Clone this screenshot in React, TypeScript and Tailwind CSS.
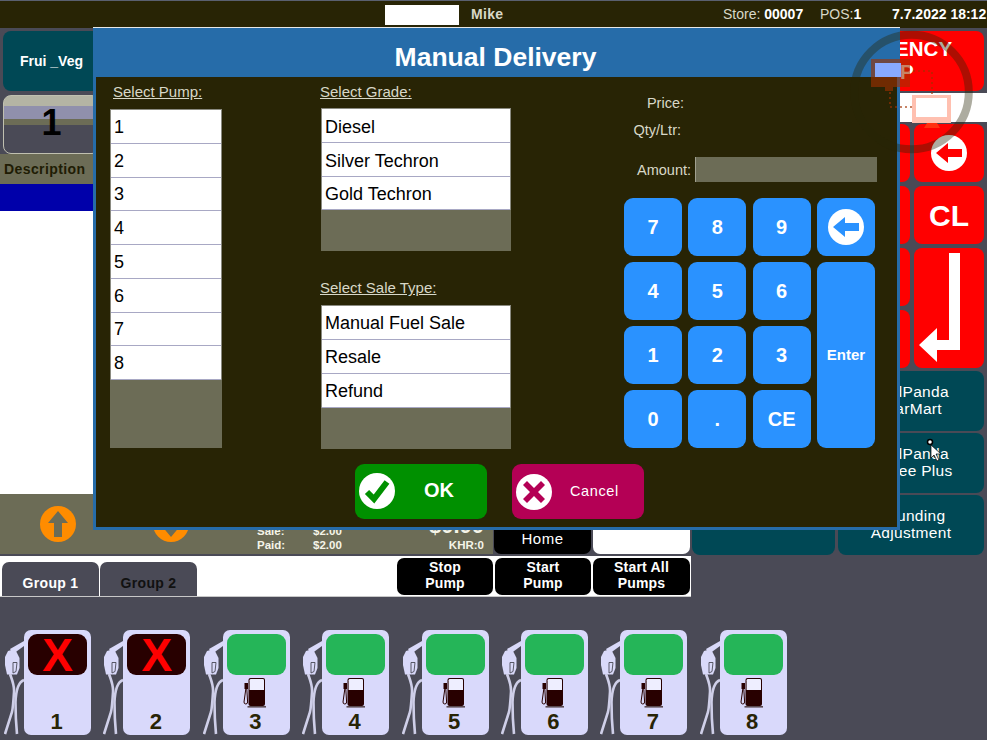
const FONT = "font-['Liberation_Sans',Arial,sans-serif]";

function ArrowCircle({ color, size = 36, dir = "left" }: { color: string; size?: number; dir?: string }) {
  const rot = dir === "up" ? 90 : dir === "down" ? -90 : 0;
  return (
    <svg width={size} height={size} viewBox="-18 -18 36 36" className="shrink-0">
      <circle r="18" fill={dir === "left" ? "#fff" : "#ff8c00"} />
      <path transform={`rotate(${rot})`} d="M-13 0 L-1 -10 L-1 -4 L13 -4 L13 4 L-1 4 L-1 10 Z" fill={color} />
    </svg>
  );
}

function Nozzle() {
  return (
    <svg width="20" height="105" viewBox="0 0 20 105" className="shrink-0" fill="none">
      <path d="M20 11 L6 19 L9 24 L20 16 Z" fill="#d9d9f9" />
      <path d="M1 27 L4 21 L11 19 L15.5 28 L15.5 38 L13 44.5 L3 44.5 L1 35 Z" fill="#d9d9f9" />
      <path d="M9 32.5 H13 L12 41.5 L9 43 Z" stroke="#4a4a56" strokeWidth="0.9" />
      <path d="M6 44 C8 50 10.5 55 10 62 C9.5 70 9 78 8 82 L1 104" stroke="#cfcfe8" strokeWidth="2.6" />
      <path d="M20 50 C14 52 12 60 11.5 72 C11.5 84 12 94 13 104" stroke="#cfcfe8" strokeWidth="2.6" />
    </svg>
  );
}

function FuelIcon() {
  return (
    <svg width="24" height="33" viewBox="0 0 24 33" className="shrink-0">
      <rect x="5.5" y="1" width="16.5" height="28" rx="2" fill="#280000" />
      <path d="M6.6 3.2 Q6.6 2 8 2 L19.8 2 Q21 2 21 3.2 L21 13 L6.6 13 Z" fill="#eeeeff" />
      <rect x="4.5" y="29" width="18.5" height="1.6" fill="#5a4a50" />
      <rect x="1.5" y="6" width="3.5" height="6" fill="#280000" />
      <path d="M2.8 12 L1 25 Q1 27 2.8 27 Q4.6 27 4.6 25 L3.8 12" fill="none" stroke="#280000" strokeWidth="1" />
    </svg>
  );
}

function Pump({ n, off }: { n: number; off?: boolean }) {
  return (
    <div className="flex shrink-0">
      <Nozzle />
      <div className="w-[67px] h-[105px] rounded-[7px] bg-[#d9d9fb] flex flex-col items-center pt-[4px]">
        {off ? (
          <div className="w-[59px] h-[41px] rounded-[9px] bg-[#280000] flex items-center justify-center text-[#ff0000] text-[46px] leading-none font-bold">X</div>
        ) : (
          <div className="w-[59px] h-[41px] rounded-[9px] bg-[#25b558]" />
        )}
        <div className="h-[33px] mt-[2px] -ml-[3px]">{off ? null : <FuelIcon />}</div>
        <div className="text-[22px] leading-[22px] mt-[1px] pr-[2px] font-bold text-[#282405]">{n}</div>
      </div>
    </div>
  );
}

function BlackBtn({ children, w = "w-[96px]" }: { children: React.ReactNode; w?: string }) {
  return (
    <div className={`${w} h-[37px] pb-[3px] rounded-[7px] bg-black text-white text-[14px] leading-[16px] font-bold tracking-[0.2px] flex items-center justify-center text-center`}>
      {children}
    </div>
  );
}

function RedKey({ children, className = "" }: { children?: React.ReactNode; className?: string }) {
  return <div className={`rounded-[8px] bg-[#ff0000] text-white flex items-center justify-center ${className}`}>{children}</div>;
}

function Teal({ children }: { children?: React.ReactNode }) {
  return (
    <div className="rounded-[8px] bg-[#004855] text-white text-[15.5px] leading-[17px] tracking-[0.3px] flex items-center justify-center text-center h-[60px] pb-[2px]">
      {children}
    </div>
  );
}

function ListBox({ items, fill, rowPad = "pt-[2px]" }: { items: string[]; fill: string; rowPad?: string }) {
  return (
    <div className="flex flex-col bg-[#6c6c56]">
      <div className="border border-[#8a8a80] border-b-0">
        {items.map((t) => (
          <div key={t} className={`bg-white text-black text-[18px] h-[33.75px] pl-[3px] flex items-center border-b border-[#a8a8c4] ${rowPad}`}>
            {t}
          </div>
        ))}
      </div>
      <div className={fill} />
    </div>
  );
}

function NumKey({ children, className = "" }: { children: React.ReactNode; className?: string }) {
  return (
    <div className={`rounded-[9px] bg-[#2a92ff] text-white text-[20px] font-bold flex items-center justify-center ${className}`}>
      {children}
    </div>
  );
}

function Dialog() {
  const label = "text-[15px] leading-[16px] text-[#d8d8c8] underline underline-offset-1";
  const small = "text-[14.5px] leading-[20px] text-[#d8d8c8]";
  return (
    <div className="absolute left-[93px] top-[27px] w-[807px] h-[503px] border-t border-[#e8e8e8] bg-[#266ca9] flex flex-col">
      <div className="h-[49px] flex items-center justify-center text-white text-[26.5px] font-bold pt-[10px] pr-[2px]">Manual Delivery</div>
      <div className="flex-1 mx-[3px] mb-[3px] bg-[#282405] flex flex-col">
        <div className="flex h-[371px]">
          <div className="ml-[14px] w-[112px] pt-[7px]">
            <div className={`${label} ml-[3px] mb-[9px]`}>Select Pump:</div>
            <ListBox items={["1", "2", "3", "4", "5", "6", "7", "8"]} fill="h-[68px]" />
          </div>
          <div className="ml-[99px] w-[190px] pt-[7px]">
            <div className={`${label} -ml-px mb-[8px]`}>Select Grade:</div>
            <ListBox items={["Diesel", "Silver Techron", "Gold Techron"]} fill="h-[41px]" rowPad="pt-[4px]" />
            <div className={`${label} -ml-px mt-[29px] mb-[9px]`}>Select Sale Type:</div>
            <ListBox items={["Manual Fuel Sale", "Resale", "Refund"]} fill="h-[41px]" />
          </div>
          <div className="ml-[113px] w-[253px] pt-[16px]">
            <div className={`${small} text-right w-[60px]`}>Price:</div>
            <div className={`${small} text-right w-[57px] mt-[7px]`}>Qty/Ltr:</div>
            <div className="flex items-center mt-[17px] h-[25px]">
              <div className={`${small} w-[67px] text-right mr-[4px]`}>Amount:</div>
              <div className="w-[182px] h-[25px] bg-[#6c6c56] border-l border-[#a0a090]" />
            </div>
            <div className="grid grid-cols-[58px_58px_58px_58px] grid-rows-[58px_58px_58px_58px] gap-x-[6.3px] gap-y-[6px] mt-[16px]">
              <NumKey>7</NumKey>
              <NumKey>8</NumKey>
              <NumKey>9</NumKey>
              <NumKey><ArrowCircle color="#2a92ff" /></NumKey>
              <NumKey>4</NumKey>
              <NumKey>5</NumKey>
              <NumKey>6</NumKey>
              <NumKey className="row-span-3 !text-[15px]">Enter</NumKey>
              <NumKey>1</NumKey>
              <NumKey>2</NumKey>
              <NumKey>3</NumKey>
              <NumKey>0</NumKey>
              <NumKey>.</NumKey>
              <NumKey>CE</NumKey>
            </div>
          </div>
        </div>
        <div className="flex ml-[259px] gap-[25px] mt-[16px]">
          <div className="w-[132px] h-[55px] rounded-[9px] bg-[#009000] flex items-center pl-[4px] pb-[1px] text-white">
            <svg width="36" height="36" viewBox="-18 -18 36 36">
              <circle r="18" fill="#fff" />
              <path d="M-10 1 L-3 8 L10 -9" fill="none" stroke="#009000" strokeWidth="6" />
            </svg>
            <span className="ml-[29px] -mt-[2px] text-[20px] font-bold">OK</span>
          </div>
          <div className="w-[132px] h-[55px] rounded-[9px] bg-[#b40055] flex items-center pl-[4px] text-white">
            <svg width="36" height="36" viewBox="-18 -18 36 36">
              <circle r="18" fill="#fff" />
              <path d="M-11 -7 L-7 -11 L0 -4 L7 -11 L11 -7 L4 0 L11 7 L7 11 L0 4 L-7 11 L-11 7 L-4 0 Z" fill="#b40055" />
            </svg>
            <span className="ml-[18px] text-[14.5px] tracking-[0.6px]">Cancel</span>
          </div>
        </div>
      </div>
    </div>
  );
}

function NetOverlay() {
  return (
    <svg className="absolute left-[850px] top-[28px] pointer-events-none" width="127" height="127" viewBox="850 28 127 127" fill="none">
      <circle cx="911.5" cy="92" r="57.3" stroke="#282405" strokeOpacity="0.38" strokeWidth="8" />
      <path d="M913 71 H932 V95 M890 92 V107 H912" stroke="#a03000" strokeOpacity="0.6" strokeWidth="2" strokeDasharray="2 3" />
      <rect x="871" y="59" width="39" height="28" fill="#a03000" fillOpacity="0.6" />
      <rect x="875" y="63" width="26" height="14" fill="#88aaff" />
      <rect x="885" y="87" width="8" height="4" fill="#a03000" fillOpacity="0.6" />
      <rect x="912" y="95" width="39" height="28" fill="#ffc0b0" />
      <rect x="916" y="98" width="31" height="19" fill="#fff" />
      <path d="M927 123 H937 L940 128 H924 Z" fill="#ff3010" />
    </svg>
  );
}

export default function App() {
  return (
    <div className={`relative w-[987px] h-[740px] overflow-hidden bg-[#4a4a56] ${FONT}`}>
      <div className="h-[28px] bg-[#282405] border-t border-[#5a6070] flex items-center text-[14px] text-[#d8d8c8]">
        <div className="ml-[385px] w-[74px] h-[20px] bg-white" />
        <div className="ml-[12px] w-[252px] font-bold tracking-[0.3px]">Mike</div>
        <div className="w-[97px]">Store: <span className="font-bold text-white">00007</span></div>
        <div className="w-[72px]">POS:<span className="font-bold text-white">1</span></div>
        <div className="font-bold text-white whitespace-nowrap">7.7.2022 18:12</div>
      </div>

      <div className="flex">
        <div className="w-[691px] shrink-0 flex flex-col">
          <div className="h-[60px] mt-[3px] ml-[3px] w-[97px] rounded-[8px] bg-[#004855] text-white font-bold text-[14px] flex items-center justify-center">Frui _Veg</div>
          <div className="h-[59px] mt-[4px] ml-[3px] w-[97px] rounded-[8px] border border-[#c0c0b0] bg-[linear-gradient(#b4b4a4_0,#b4b4a4_10px,#9090ac_10px,#9090ac_23px,#6c6c56_23px,#6c6c56_29px,#4a4a56_29px)] flex items-center justify-center pb-[3px] text-black text-[36px] font-bold">1</div>
          <div className="h-[30px] bg-[#6c6c56] flex items-center pl-[4px] text-[14px] font-bold tracking-[0.4px] text-[#201c04]">Description</div>
          <div className="h-[27px] bg-[#0000aa]" />
          <div className="h-[283px] bg-white" />
          <div className="h-[60px] flex">
            <div className="w-[493px] bg-[#6c6c56] flex items-center text-[#f4f4e8] text-[11.5px] leading-[14px] font-bold">
              <div className="ml-[40px]"><ArrowCircle color="#6c6c56" dir="up" /></div>
              <div className="ml-[77px]"><ArrowCircle color="#6c6c56" dir="down" /></div>
              <div className="ml-[68px] w-[56px] mt-[28px]"><div>Sale:</div><div>Paid:</div></div>
              <div className="mt-[28px]"><div>$2.00</div><div>$2.00</div></div>
              <div className="ml-auto mr-[9px] text-right mt-[17px]">
                <div className="text-[22px] leading-[23px]">$0.00</div>
                <div className="mt-[1px]">KHR:0</div>
              </div>
            </div>
            <div className="flex gap-[2px] items-end ml-px">
              <div className="w-[97px] h-[57px] rounded-[7px] bg-black text-white text-[15px] tracking-[0.5px] flex items-end justify-center pb-[4px]">Home</div>
              <div className="w-[97px] h-[57px] rounded-[7px] bg-white" />
            </div>
          </div>
          <div className="mt-[2px] h-[41px] bg-white border-b border-[#c8c8c8] flex items-end pl-[2px]">
            <div className="w-[97px] h-[34px] pt-[8px] rounded-t-[7px] bg-[#4a4a56] text-white text-[14px] font-bold tracking-[0.3px] flex items-center justify-center">Group 1</div>
            <div className="w-[97px] h-[34px] pt-[8px] ml-[1px] rounded-t-[7px] bg-[#4a4a56] text-[#111] text-[14px] font-bold tracking-[0.3px] flex items-center justify-center">Group 2</div>
            <div className="flex gap-[2px] ml-[200px] self-start mt-[2px]">
              <BlackBtn>Stop<br />Pump</BlackBtn>
              <BlackBtn>Start<br />Pump</BlackBtn>
              <BlackBtn w="w-[97px]">Start All<br />Pumps</BlackBtn>
            </div>
          </div>
        </div>

        <div className="w-[296px] flex flex-col pl-[1px]">
          <div className="flex mt-[3px] justify-end pr-[3px]">
            <RedKey className="w-[196px] h-[60px] text-[20.5px] leading-[23px] pb-[2px] font-bold text-center">EMERGENCY<br />STOP</RedKey>
          </div>
          <div className="h-[29px] mt-[2px] bg-white" />
          <div className="grid grid-cols-[70px_70px_70px_70px] grid-rows-[58px_58px_58px_58px] gap-[4px] mt-[2px]">
            <RedKey /><RedKey /><RedKey />
            <RedKey><ArrowCircle color="#ff0000" /></RedKey>
            <RedKey /><RedKey /><RedKey />
            <RedKey className="text-[30px] font-bold">CL</RedKey>
            <RedKey /><RedKey /><RedKey />
            <RedKey className="row-span-2">
              <svg width="70" height="119" viewBox="914 248 70 119">
                <path d="M949 252 H960 V349 H937 V361 L919 344 L937 327 V339 H949 Z" fill="#fff" />
              </svg>
            </RedKey>
            <RedKey /><RedKey /><RedKey />
          </div>
          <div className="grid grid-cols-[143px_146px] gap-x-[3px] gap-y-[2px] mt-[3px]">
            <Teal />
            <Teal>RedPanda<br />StarMart</Teal>
            <Teal />
            <Teal>RedPanda<br />Coffee Plus</Teal>
            <Teal />
            <Teal>Rounding<br />Adjustment</Teal>
          </div>
        </div>
      </div>

      <div className="flex gap-[12.4px] pl-[4px] mt-[33px]">
        <Pump n={1} off />
        <Pump n={2} off />
        <Pump n={3} />
        <Pump n={4} />
        <Pump n={5} />
        <Pump n={6} />
        <Pump n={7} />
        <Pump n={8} />
      </div>

      <Dialog />
      <NetOverlay />
      <svg className="absolute left-[926px] top-[438px]" width="20" height="24" viewBox="0 0 20 24">
        <circle cx="4" cy="4" r="2.5" fill="#fff" stroke="#000" strokeWidth="1.5" />
        <path d="M5 7 L5 20 L8 17 L11 23 L13 22 L10 16 L15 16 Z" fill="#fff" stroke="#000" strokeWidth="0.7" />
      </svg>
    </div>
  );
}
